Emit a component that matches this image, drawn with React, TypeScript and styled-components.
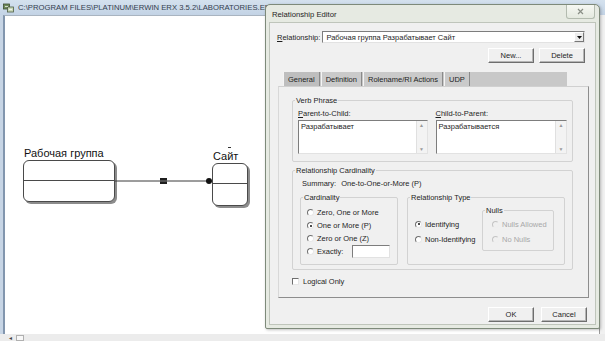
import React from 'react';
import styled, { createGlobalStyle } from 'styled-components';

const GlobalStyle = createGlobalStyle`
  html, body { margin: 0; padding: 0; background: #fff; }
  body { font-family: "Liberation Sans", Arial, sans-serif; }
  * { box-sizing: border-box; }
`;

const Screen = styled.div`
  position: relative;
  width: 605px;
  height: 341px;
  overflow: hidden;
  display: flex;
  flex-direction: column;
  background: #c7d5e5;
`;

const TitleBar = styled.div`
  height: 15px;
  flex: none;
  display: flex;
  align-items: center;
  gap: 4px;
  padding-left: 3px;
  background: linear-gradient(#d4e1ee, #c3d3e5);
  color: #34404e;
  font-size: 7.7px;
  white-space: nowrap;
`;

const Body = styled.div`
  flex: 1;
  display: flex;
  padding-left: 3px;
`;

const Canvas = styled.div`
  position: relative;
  flex: 1;
  background: #fff;
  border-left: 2px solid #8296ae;
  border-top: 1px solid #a9b4c0;
`;

const SidePanel = styled.div`
  width: 6px;
  background: #f1f1f1;
  border-left: 1px solid #9a9a9a;
`;

const StatusBar = styled.div`
  height: 7px;
  flex: none;
  display: flex;
  align-items: center;
  gap: 4px;
  padding-left: 9px;
  background: #ececec;
  font-size: 6px;
  color: #444;
`;

const StatusBox = styled.span`
  width: 8px;
  height: 6px;
  border: 1px solid #b0b0b0;
  background: #f8f8f8;
`;

/* ---------- diagram ---------- */

const Entity = styled.div<{ $x: number; $y: number }>`
  position: absolute;
  left: ${(p) => p.$x}px;
  top: ${(p) => p.$y}px;
  display: flex;
  flex-direction: column;
`;

const EntityName = styled.div`
  font-size: 11px;
  line-height: 12px;
  height: 13px;
  color: #111;
  white-space: nowrap;
  margin-left: 1px;
`;

const EntityBox = styled.div<{ $w: number; $h: number }>`
  width: ${(p) => p.$w}px;
  height: ${(p) => p.$h}px;
  border: 1px solid #4a4a4a;
  border-radius: 6px;
  background: #fff;
  box-shadow: 2px 2px 0 #8c8c8c;
`;

const KeyArea = styled.div`
  height: 20px;
  border-bottom: 1px solid #4a4a4a;
`;

const Wires = styled.svg`
  position: absolute;
  left: 0;
  top: 0;
  width: 100%;
  height: 100%;
  pointer-events: none;
`;

/* ---------- dialog ---------- */

const Dialog = styled.div`
  position: absolute;
  left: 265px;
  top: 4px;
  width: 335px;
  height: 325px;
  display: flex;
  flex-direction: column;
  background: #e6eae2;
  border: 1px solid #7e8a7a;
  border-radius: 5px 5px 2px 2px;
  box-shadow: 1px 1px 3px rgba(0, 0, 0, 0.25);
  font-size: 7.5px;
  color: #1e1e1e;
`;

const DialogTitle = styled.div`
  height: 17px;
  flex: none;
  display: flex;
  justify-content: space-between;
  align-items: flex-start;
  padding-left: 6px;
  padding-right: 4px;
`;

const DialogCaption = styled.span`
  margin-top: 5px;
  font-size: 7.7px;
`;

const CloseButton = styled.div`
  width: 29px;
  height: 14px;
  display: flex;
  align-items: center;
  justify-content: center;
  border: 1px solid #b3bbaf;
  border-top: none;
  border-radius: 0 0 3px 3px;
  background: linear-gradient(#f6f8f3, #e4e9df);
`;

const Client = styled.div`
  flex: 1;
  margin: 0 3px 3px 3px;
  background: #f0f0f0;
  border: 1px solid #bfc5bb;
  display: flex;
  flex-direction: column;
  padding: 8px 0 0 7px;
`;

const Row = styled.div<{ $end?: boolean }>`
  width: 308px;
  display: flex;
  align-items: center;
  justify-content: ${(p) => (p.$end ? 'flex-end' : 'flex-start')};
`;

const FieldLabel = styled.span`
  white-space: nowrap;
  margin-right: 2px;
`;

const Combo = styled.div`
  flex: 1;
  height: 12px;
  display: flex;
  align-items: center;
  background: #fff;
  border: 1px solid;
  border-color: #7d7d7d #e2e2e2 #e2e2e2 #7d7d7d;
  padding-left: 3px;
  white-space: nowrap;
`;

const ComboText = styled.span`
  flex: 1;
`;

const ComboArrow = styled.span`
  width: 10px;
  height: 10px;
  display: flex;
  align-items: center;
  justify-content: center;
  background: #ececec;
  border: 1px solid;
  border-color: #fff #777 #777 #fff;
`;

const Button = styled.div<{ $w?: number }>`
  width: ${(p) => p.$w ?? 46}px;
  height: 15px;
  display: flex;
  align-items: center;
  justify-content: center;
  background: #f0f0f0;
  border: 1px solid;
  border-color: #fff #6e6e6e #6e6e6e #fff;
  box-shadow: inset -1px -1px 0 #b5b5b5;
`;

const ButtonRow = styled(Row)<{ $gap: number; $top: number }>`
  gap: ${(p) => p.$gap}px;
  margin-top: ${(p) => p.$top}px;
`;

const TabStrip = styled.div`
  width: 284px;
  height: 14px;
  margin: 9px 0 0 6px;
  display: flex;
  background: #c8c8c8;
`;

const Tab = styled.div<{ $active?: boolean }>`
  height: 100%;
  padding: 0 4px;
  display: flex;
  align-items: center;
  white-space: nowrap;
  background: ${(p) => (p.$active ? '#bebebe' : '#cacaca')};
  border-left: 1px solid #f4f4f4;
  border-right: 1px solid #8a8a8a;
  margin-right: 1px;
`;

const TabPanel = styled.div`
  width: 311px;
  height: 212px;
  margin-left: 1px;
  padding: 13px 0 0 13px;
  display: flex;
  flex-direction: column;
  border: 1px solid;
  border-color: #d0d0d0 #8d8d8d #8d8d8d #d8d8d8;
`;

const Group = styled.div<{ $w: number; $h: number; $top?: number }>`
  position: relative;
  width: ${(p) => p.$w}px;
  height: ${(p) => p.$h}px;
  margin-top: ${(p) => p.$top ?? 0}px;
  flex: none;
  border: 1px solid #d2d2d2;
  border-radius: 2px;
`;

const GroupLabel = styled.span`
  position: absolute;
  top: -5px;
  left: 2px;
  padding: 0 1px;
  line-height: 9px;
  background: #f0f0f0;
  white-space: nowrap;
`;

const VerbBody = styled.div`
  display: flex;
  gap: 8px;
  padding: 9px 5px 0 5px;
`;

const VerbColumn = styled.div<{ $w: number }>`
  width: ${(p) => p.$w}px;
  display: flex;
  flex-direction: column;
  gap: 2px;
`;

const SmallLabel = styled.span`
  line-height: 8px;
  white-space: nowrap;
`;

const TextArea = styled.div`
  height: 34px;
  display: flex;
  background: #fff;
  border: 1px solid;
  border-color: #7d7d7d #e2e2e2 #e2e2e2 #7d7d7d;
`;

const TextContent = styled.div`
  flex: 1;
  padding: 1px 2px;
  white-space: nowrap;
`;

const ScrollTrack = styled.div`
  width: 11px;
  display: flex;
  flex-direction: column;
  justify-content: space-between;
  align-items: center;
  background: #f3f3f3;
  border-left: 1px solid #e0e0e0;
  color: #9a9a9a;
  font-size: 5px;
  line-height: 8px;
`;

const CardinalityBody = styled.div`
  display: flex;
  flex-direction: column;
  padding: 9px 0 0 7px;
`;

const Summary = styled.div`
  display: flex;
  gap: 5px;
  line-height: 8px;
  margin-left: 2px;
`;

const SubGroups = styled.div`
  display: flex;
  gap: 9px;
  margin-top: 9px;
`;

const RadioList = styled.div<{ $pt: number; $pl: number; $gap?: number; $w?: number }>`
  display: flex;
  flex-direction: column;
  gap: ${(p) => p.$gap ?? 0}px;
  padding: ${(p) => p.$pt}px 0 0 ${(p) => p.$pl}px;
  width: ${(p) => (p.$w ? `${p.$w}px` : 'auto')};
`;

const OptionRow = styled.div<{ $disabled?: boolean }>`
  height: 13px;
  display: flex;
  align-items: center;
  gap: 3px;
  white-space: nowrap;
  color: ${(p) => (p.$disabled ? '#a8a8a8' : '#1e1e1e')};
`;

const Radio = styled.span<{ $checked?: boolean; $disabled?: boolean }>`
  position: relative;
  width: 7px;
  height: 7px;
  flex: none;
  border-radius: 50%;
  border: 1px solid;
  border-color: ${(p) =>
    p.$disabled ? '#c4c4c4 #efefef #efefef #c4c4c4' : '#707070 #e8e8e8 #e8e8e8 #707070'};
  background: ${(p) => (p.$disabled ? '#f0f0f0' : '#fff')};

  &::after {
    content: '';
    display: ${(p) => (p.$checked ? 'block' : 'none')};
    position: absolute;
    left: 1.5px;
    top: 1.5px;
    width: 2px;
    height: 2px;
    border-radius: 50%;
    background: #111;
  }
`;

const ExactInput = styled.span`
  width: 38px;
  height: 13px;
  margin-left: 6px;
  background: #fff;
  border: 1px solid;
  border-color: #7d7d7d #e2e2e2 #e2e2e2 #7d7d7d;
`;

const RelTypeBody = styled.div`
  display: flex;
  padding: 12px 0 0 7px;
`;

const CheckRow = styled.div`
  display: flex;
  align-items: center;
  gap: 4px;
  height: 13px;
  margin-top: 5px;
`;

const Checkbox = styled.span`
  width: 7px;
  height: 7px;
  background: #fff;
  border: 1px solid;
  border-color: #6e6e6e #e6e6e6 #e6e6e6 #6e6e6e;
`;

const ERwinIcon = () => (
  <svg width="11" height="10" viewBox="0 0 11 10">
    <rect x="0.5" y="1" width="6" height="5" fill="#6f8a5a" stroke="#3e4e34" strokeWidth="0.8" />
    <rect x="4.5" y="4" width="6" height="5" fill="#c9d7b8" stroke="#4d5c44" strokeWidth="0.8" />
    <path d="M2 3.5h3M6 6.5h3" stroke="#fff" strokeWidth="0.7" />
  </svg>
);

const CloseIcon = () => (
  <svg width="7" height="7" viewBox="0 0 7 7">
    <path d="M1 1L6 6M6 1L1 6" stroke="#8a8f86" strokeWidth="1.2" />
  </svg>
);

const DownArrow = () => (
  <svg width="5" height="3" viewBox="0 0 5 3">
    <path d="M0 0h5L2.5 3z" fill="#111" />
  </svg>
);

const cardinalityOptions = [
  { label: 'Zero, One or More', checked: false },
  { label: 'One or More (P)', checked: true },
  { label: 'Zero or One (Z)', checked: false },
];

const App: React.FC = () => {
  return (
    <>
      <GlobalStyle />
      <Screen>
        <TitleBar>
          <ERwinIcon />
          <span>{'C:\\PROGRAM FILES\\PLATINUM\\ERWIN ERX 3.5.2\\LABORATORIES.ERX'}</span>
        </TitleBar>

        <Body>
          <Canvas>
            <Entity $x={18} $y={131}>
              <EntityName>Рабочая группа</EntityName>
              <EntityBox $w={92} $h={42}>
                <KeyArea />
              </EntityBox>
            </Entity>

            <Entity $x={207} $y={134}>
              <EntityName>Сайт</EntityName>
              <EntityBox $w={36} $h={43}>
                <KeyArea />
              </EntityBox>
            </Entity>

            <Wires>
              <line x1="110" y1="165" x2="204" y2="165" stroke="#3a3a3a" strokeWidth="1" />
              <rect x="155" y="162" width="7" height="6" fill="#1f1f1f" />
              <line x1="155" y1="165" x2="162" y2="165" stroke="#9a9a9a" strokeWidth="0.8" />
              <circle cx="204" cy="165" r="3" fill="#111" />
              <line x1="223" y1="131.5" x2="226" y2="131.5" stroke="#333" strokeWidth="1" />
            </Wires>
          </Canvas>
          <SidePanel />
        </Body>

        <StatusBar>
          <span>◂</span>
          <StatusBox />
        </StatusBar>

        <Dialog>
          <DialogTitle>
            <DialogCaption>Relationship Editor</DialogCaption>
            <CloseButton>
              <CloseIcon />
            </CloseButton>
          </DialogTitle>

          <Client>
            <Row>
              <FieldLabel>
                <u>R</u>elationship:
              </FieldLabel>
              <Combo>
                <ComboText>Рабочая группа Разрабатывает Сайт</ComboText>
                <ComboArrow>
                  <DownArrow />
                </ComboArrow>
              </Combo>
            </Row>

            <ButtonRow $end $gap={5} $top={5}>
              <Button>New...</Button>
              <Button>Delete</Button>
            </ButtonRow>

            <TabStrip>
              <Tab $active>General</Tab>
              <Tab>Definition</Tab>
              <Tab>Rolename/RI Actions</Tab>
              <Tab>UDP</Tab>
            </TabStrip>

            <TabPanel>
              <Group $w={281} $h={62}>
                <GroupLabel>Verb Phrase</GroupLabel>
                <VerbBody>
                  <VerbColumn $w={130}>
                    <SmallLabel>
                      <u>P</u>arent-to-Child:
                    </SmallLabel>
                    <TextArea>
                      <TextContent>Разрабатывает</TextContent>
                      <ScrollTrack>
                        <span>▲</span>
                        <span>▼</span>
                      </ScrollTrack>
                    </TextArea>
                  </VerbColumn>
                  <VerbColumn $w={132}>
                    <SmallLabel>
                      <u>C</u>hild-to-Parent:
                    </SmallLabel>
                    <TextArea>
                      <TextContent>Разрабатывается</TextContent>
                      <ScrollTrack>
                        <span>▲</span>
                        <span>▼</span>
                      </ScrollTrack>
                    </TextArea>
                  </VerbColumn>
                </VerbBody>
              </Group>

              <Group $w={281} $h={100} $top={8}>
                <GroupLabel>Relationship Cardinality</GroupLabel>
                <CardinalityBody>
                  <Summary>
                    <span>Summary:</span>
                    <span>One-to-One-or-More (P)</span>
                  </Summary>
                  <SubGroups>
                    <Group $w={98} $h={68}>
                      <GroupLabel>Cardinality</GroupLabel>
                      <RadioList $pt={8} $pl={6}>
                        {cardinalityOptions.map((o) => (
                          <OptionRow key={o.label}>
                            <Radio $checked={o.checked} />
                            {o.label}
                          </OptionRow>
                        ))}
                        <OptionRow>
                          <Radio />
                          Exactly:
                          <ExactInput />
                        </OptionRow>
                      </RadioList>
                    </Group>

                    <Group $w={158} $h={68}>
                      <GroupLabel>Relationship Type</GroupLabel>
                      <RelTypeBody>
                        <RadioList $pt={7.5} $pl={0} $gap={2} $w={67}>
                          <OptionRow>
                            <Radio $checked />
                            Identifying
                          </OptionRow>
                          <OptionRow>
                            <Radio />
                            Non-Identifying
                          </OptionRow>
                        </RadioList>
                        <Group $w={72} $h={41}>
                          <GroupLabel>Nulls</GroupLabel>
                          <RadioList $pt={6.5} $pl={9} $gap={2}>
                            <OptionRow $disabled>
                              <Radio $disabled />
                              Nulls Allowed
                            </OptionRow>
                            <OptionRow $disabled>
                              <Radio $disabled />
                              No Nulls
                            </OptionRow>
                          </RadioList>
                        </Group>
                      </RelTypeBody>
                    </Group>
                  </SubGroups>
                </CardinalityBody>
              </Group>

              <CheckRow>
                <Checkbox />
                <span>Logical Only</span>
              </CheckRow>
            </TabPanel>

            <ButtonRow $end $gap={7} $top={9} style={{ width: 310 }}>
              <Button>OK</Button>
              <Button>Cancel</Button>
            </ButtonRow>
          </Client>
        </Dialog>
      </Screen>
    </>
  );
};

export default App;
